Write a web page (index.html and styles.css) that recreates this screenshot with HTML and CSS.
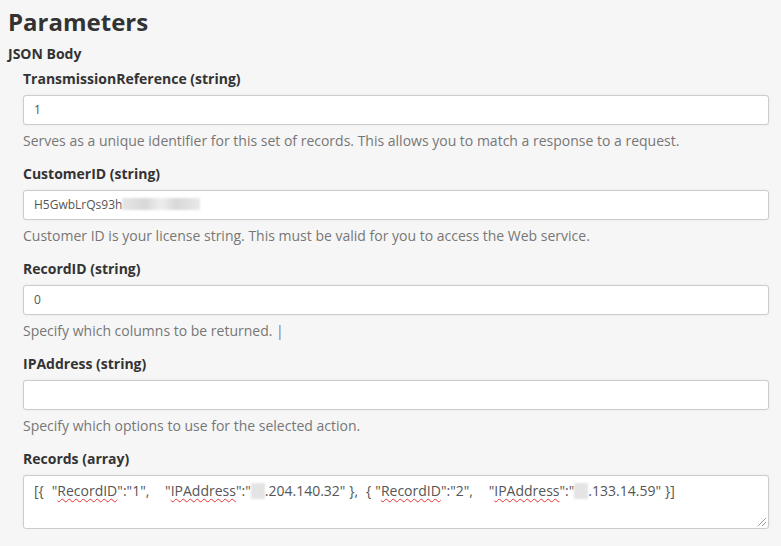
FILE: index.html
```html
<!DOCTYPE html>
<html lang="en">
<head>
    <meta charset="UTF-8">
    <title>Parameters</title>
    <link rel="stylesheet" href="styles.css">
</head>
<body>
    <h2 class="title">Parameters</h2>
    <div class="group-name">JSON Body</div>
    <div class="fields">
        <div class="field">
            <label>TransmissionReference (string)</label>
            <div class="input">1</div>
            <p class="hint">Serves as a unique identifier for this set of records. This allows you to match a response to a request.</p>
        </div>
        <div class="field">
            <label>CustomerID (string)</label>
            <div class="input">H5GwbLrQs93h<span class="blur wide"></span></div>
            <p class="hint">Customer ID is your license string. This must be valid for you to access the Web service.</p>
        </div>
        <div class="field">
            <label>RecordID (string)</label>
            <div class="input">0</div>
            <p class="hint">Specify which columns to be returned. |</p>
        </div>
        <div class="field">
            <label>IPAddress (string)</label>
            <div class="input"></div>
            <p class="hint">Specify which options to use for the selected action.</p>
        </div>
        <div class="field">
            <label>Records (array)</label>
            <div class="textarea">[{&nbsp; "<span class="typo">RecordID</span>":"1", &nbsp;&nbsp; "<span class="typo">IPAddress</span>":"<span class="blur"></span>.204.140.32" }, &nbsp;{ "<span class="typo">RecordID</span>":"2", &nbsp;&nbsp; "<span class="typo">IPAddress</span>":"<span class="blur"></span>.133.14.59" }]<span class="grip"></span></div>
        </div>
    </div>
</body>
</html>
```

FILE: styles.css
```css
body {
    margin: 0;
    padding: 8px 12px 0 8px;
    background: #f6f6f6;
    color: #333;
    font-family: 'Open Sans', 'Segoe UI', sans-serif;
}
.title {
    margin: 0;
    font-size: 24px;
    font-weight: 700;
    line-height: 28px;
}
.group-name {
    margin-top: 8px;
    font-size: 14px;
    font-weight: 700;
}
.fields {
    padding-left: 15px;
}
.field {
    margin-top: 6px;
}
.field + .field {
    margin-top: 13px;
}
label {
    display: block;
    font-size: 14px;
    font-weight: 700;
    line-height: 20px;
    margin-bottom: 6px;
}
.input, .textarea {
    box-sizing: border-box;
    background: #fff;
    border: 1px solid #ccc;
    border-radius: 3px;
    box-shadow: 0 0 3px rgba(0, 0, 0, 0.06);
    color: #555;
}
.input {
    height: 30px;
    padding: 0 10px;
    font-size: 12px;
    line-height: 28px;
}
.textarea {
    position: relative;
    height: 54px;
    padding: 5px 10px;
    font-size: 14px;
    line-height: 20px;
    word-spacing: 0.3px;
}
.hint {
    margin: 6px 0 0;
    font-size: 14px;
    line-height: 20px;
    color: #777;
}
.blur {
    display: inline-block;
    width: 14px;
    height: 16px;
    vertical-align: -3px;
    background: #e4e4e4;
    filter: blur(1px);
}
.blur.wide {
    width: 78px;
    height: 12px;
    vertical-align: -1px;
    background: linear-gradient(90deg, #e6e6e6, #d8d8d8 30%, #eee 50%, #d8d8d8 70%, #e9e9e9);
}
.typo {
    text-decoration: underline wavy #e33;
    text-decoration-thickness: 1px;
    text-underline-offset: 2px;
}
.grip {
    position: absolute;
    right: 2px;
    bottom: 2px;
    width: 8px;
    height: 8px;
    background: linear-gradient(135deg, transparent 45%, #999 45%, #999 55%, transparent 55%, transparent 70%, #999 70%, #999 80%, transparent 80%);
}
```
